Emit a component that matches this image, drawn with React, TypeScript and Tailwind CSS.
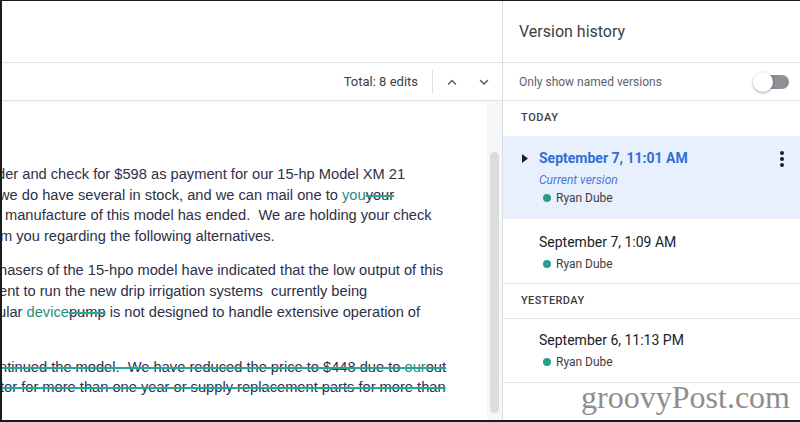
import React from 'react'

const TEAL = 'text-[#1f8f80]'

function Strike({ children, teal }: { children: React.ReactNode; teal?: boolean }) {
  return (
    <span
      className={`line-through decoration-[#25a898] decoration-2 ${teal ? TEAL : ''}`}
    >
      {children}
    </span>
  )
}

function Chevron({ up }: { up?: boolean }) {
  return (
    <svg className="w-3 h-3" viewBox="0 0 12 12" fill="none" stroke="#5f6368" strokeWidth="1.6">
      <path d={up ? 'M2.5 8 L6 4.5 L9.5 8' : 'M2.5 4.5 L6 8 L9.5 4.5'} strokeLinecap="round" strokeLinejoin="round" />
    </svg>
  )
}

function Author() {
  return (
    <div className="flex items-center h-[18px] text-[12px] text-[#3c4043]">
      <span className="w-2 h-2 rounded-full bg-[#2a9d8f] ml-[4px] mr-[5px]" />
      Ryan Dube
    </div>
  )
}

export default function App() {
  return (
    <div className="relative w-[800px] h-[422px] bg-white border-l-2 border-t border-b-2 border-[#1b1b1b] flex overflow-hidden font-['Roboto',sans-serif]">
      {/* Document side */}
      <div className="w-[500px] flex flex-col">
        <div className="h-[62px] border-b border-[#e3e3e3]" />
        <div className="h-[38px] border-b border-[#e3e3e3] shadow-[0_1px_2px_rgba(0,0,0,0.06)] flex items-center justify-end pr-[2px]">
          <span className="text-[13px] text-[#3c4043]">Total: 8 edits</span>
          <div className="w-px h-6 bg-[#e0e0e0] ml-[14px] mr-[3px]" />
          <button className="w-8 h-8 flex items-center justify-center">
            <Chevron up />
          </button>
          <button className="w-8 h-8 flex items-center justify-center">
            <Chevron />
          </button>
        </div>
        <div className="flex-1 flex min-h-0">
          <div className="flex-1 overflow-hidden pt-[63px] font-['Liberation_Sans',Arial,sans-serif] text-[14.67px] leading-[20.6px] text-[#2e3048] whitespace-nowrap">
            <div className="-ml-[5px]">der and check for $598 as payment for our 15-hp Model XM 21</div>
            <div className="-ml-[3px]">
              we do have several in stock, and we can mail one to <span className={TEAL}>you</span>
              <Strike>your</Strike>
            </div>
            <div className="ml-[3px]"> manufacture of this model has ended.&nbsp; We are holding your check</div>
            <div className="-ml-[2px]">m you regarding the following alternatives.</div>

            <div className="mt-[14px] -ml-[3px]">hasers of the 15-hpo model have indicated that the low output of this</div>
            <div className="-ml-[3px]">ent to run the new drip irrigation systems&nbsp; currently being</div>
            <div className="-ml-[4px]">
              ular <span className={TEAL}>device</span>
              <Strike>pump</Strike> is not designed to handle extensive operation of
            </div>
            <div className="h-[20.6px]" />

            <div className="mt-[14px] -ml-[3px]">
              <Strike>ntinued the model.&nbsp; We have reduced the price to $448 due to </Strike>
              <Strike teal>our</Strike>
              <Strike>out</Strike>
            </div>
            <div className="-ml-[2px]">
              <Strike>tor for more than one year or supply replacement parts for more than</Strike>
            </div>
          </div>
          {/* scrollbar */}
          <div className="w-[15px] bg-[#f6f7f8] pt-[51px] pb-[7px] flex justify-center">
            <div className="w-[9px] h-full rounded-full bg-[#dadce0]" />
          </div>
        </div>
      </div>

      {/* Version history panel */}
      <div className="flex-1 border-l border-[#dadce0] flex flex-col">
        <div className="h-[62px] border-b border-[#e3e3e3] flex items-center pl-[16px] text-[16px] text-[#3c4043]">
          Version history
        </div>
        <div className="h-[38px] border-b border-[#e3e3e3] flex items-center justify-between pl-[16px] pr-[11px]">
          <span className="text-[12px] text-[#5f6368]">Only show named versions</span>
          <div className="relative w-[36px] h-[20px] flex items-center">
            <div className="absolute right-0 w-[32px] h-[14px] rounded-full bg-[#8d9196]" />
            <div className="absolute left-0 w-[20px] h-[20px] rounded-full bg-white shadow-[0_1px_3px_rgba(0,0,0,0.35)]" />
          </div>
        </div>

        <div className="h-[35px] flex items-center pl-[18px] text-[11px] font-medium tracking-[0.6px] text-[#3c4043]">
          TODAY
        </div>

        <div className="h-[83px] bg-[#e8f0fe] flex pt-[12px]">
          <div className="w-[36px] flex justify-end pr-[11px] pt-[6px]">
            <svg className="w-[6px] h-[9px]" viewBox="0 0 6 9">
              <path d="M0 0 L6 4.5 L0 9 Z" fill="#202124" />
            </svg>
          </div>
          <div className="flex-1">
            <div className="h-[20px] leading-[20px] text-[14px] font-bold text-[#2f6fd3]">September 7, 11:01 AM</div>
            <div className="mt-[3px] h-[18px] leading-[18px] text-[12px] italic text-[#4a7bcf]">Current version</div>
            <Author />
          </div>
          <div className="w-[36px] flex flex-col items-center pt-[3px] gap-[2px]">
            <span className="w-1 h-1 rounded-full bg-[#202124]" />
            <span className="w-1 h-1 rounded-full bg-[#202124]" />
            <span className="w-1 h-1 rounded-full bg-[#202124]" />
          </div>
        </div>

        <div className="h-[65px] border-b border-[#e8e8e8] pl-[36px] pt-[13px]">
          <div className="h-[20px] leading-[20px] text-[14px] text-[#202124]">September 7, 1:09 AM</div>
          <div className="mt-[3px]">
            <Author />
          </div>
        </div>

        <div className="h-[35px] border-b border-[#e8e8e8] flex items-center pl-[18px] text-[11px] font-medium tracking-[0.4px] text-[#3c4043]">
          YESTERDAY
        </div>

        <div className="h-[64px] border-b border-[#e8e8e8] pl-[36px] pt-[11px]">
          <div className="h-[20px] leading-[20px] text-[14px] text-[#202124]">September 6, 11:13 PM</div>
          <div className="mt-[3px]">
            <Author />
          </div>
        </div>
      </div>

      {/* watermark */}
      <div className="absolute right-[10px] bottom-[5px] font-['Liberation_Serif',serif] text-[32px] leading-[36px] text-[#8e8e8e]">
        groovyPost.com
      </div>
    </div>
  )
}
